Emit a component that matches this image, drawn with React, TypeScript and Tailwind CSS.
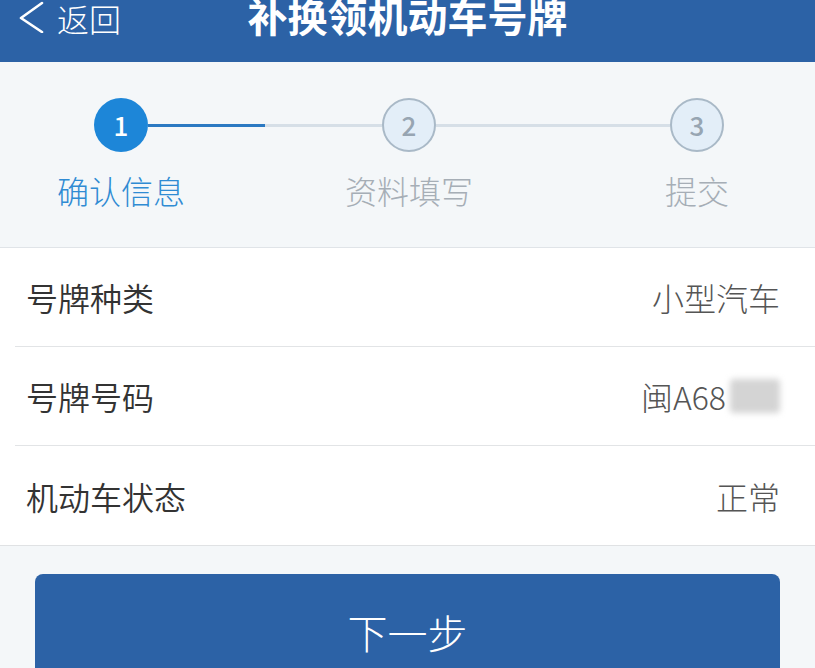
import React from "react";

const font = { fontFamily: '"Noto Sans CJK SC", "Noto Sans", sans-serif' };

function Circle({ n, active }: { n: number; active?: boolean }) {
  return active ? (
    <div className="flex h-[54px] w-[54px] shrink-0 items-center justify-center rounded-full bg-[#1d86d8] text-[26px] font-medium leading-none text-white">
      {n}
    </div>
  ) : (
    <div className="flex h-[54px] w-[54px] shrink-0 items-center justify-center rounded-full border-[2px] border-[#a9b9c7] bg-[#e3eef8] text-[26px] font-medium leading-none text-[#97a5b2]">
      {n}
    </div>
  );
}

function Row({
  label,
  children,
  last,
}: {
  label: string;
  children: React.ReactNode;
  last?: boolean;
}) {
  return (
    <div className={`flex h-[99px] items-center justify-between pl-[11px] pr-[35px] ${last ? "" : "border-b border-[#e2e4e6]"}`}>
      <span className="text-[32px] font-[350] leading-none text-[#333333]">{label}</span>
      <span className="flex items-center text-[32px] font-light leading-none text-[#555555]">{children}</span>
    </div>
  );
}

export default function App() {
  return (
    <div className="min-h-[668px] w-[815px] overflow-hidden bg-[#f4f7f9]" style={font}>
      {/* Header */}
      <div className="h-[62px] bg-[#2c62a6]">
        <div className="grid h-[32px] grid-cols-[1fr_auto_1fr] items-center">
          <div className="flex items-center pl-[19px]">
            <svg width="26" height="32" viewBox="0 0 26 32" fill="none" className="-mt-[1px]">
              <polyline points="23,2 2,17 23,31" stroke="#ffffff" strokeWidth="2.6" strokeLinecap="round" strokeLinejoin="round" />
            </svg>
            <span className="ml-[12px] text-[32px] font-light leading-none text-white">返回</span>
          </div>
          <div className="-mt-[5px] text-[40px] font-bold leading-none text-white">补换领机动车号牌</div>
          <div />
        </div>
      </div>

      {/* Steps */}
      <div className="border-b border-[#e0e4e8] bg-[#f4f7f9] pb-[41px] pt-[36px]">
        <div className="flex items-center pl-[94px] pr-[91px]">
          <Circle n={1} active />
          <div className="flex h-[3px] flex-1">
            <div className="h-full w-1/2 bg-[#2b79c2]" />
            <div className="h-full w-1/2 bg-[#d6dfe7]" />
          </div>
          <Circle n={2} />
          <div className="h-[3px] flex-1 bg-[#d6dfe7]" />
          <Circle n={3} />
        </div>
        <div className="mt-[22px] flex justify-between pl-[56px] pr-[53px]">
          <div className="w-[130px] text-center text-[32px] font-light leading-[32px] text-[#2f8bd3]">确认信息</div>
          <div className="w-[130px] text-center text-[32px] font-light leading-[32px] text-[#a6aeb6]">资料填写</div>
          <div className="w-[130px] text-center text-[32px] font-light leading-[32px] text-[#a6aeb6]">提交</div>
        </div>
      </div>

      {/* Info rows */}
      <div className="border-b border-[#e0e2e4] bg-white pl-[15px]">
        <Row label="号牌种类">小型汽车</Row>
        <Row label="号牌号码">
          闽A68
          <span className="ml-[4px] inline-block h-[34px] w-[50px] rounded-[4px] bg-[#d4d4d4] blur-[3px]" />
        </Row>
        <Row label="机动车状态" last>
          正常
        </Row>
      </div>

      {/* Button */}
      <div className="px-[35px] pt-[28px]">
        <div className="flex h-[116px] items-center justify-center rounded-[8px] bg-[#2c62a6] text-[40px] font-light leading-none text-white">
          下一步
        </div>
      </div>
    </div>
  );
}
